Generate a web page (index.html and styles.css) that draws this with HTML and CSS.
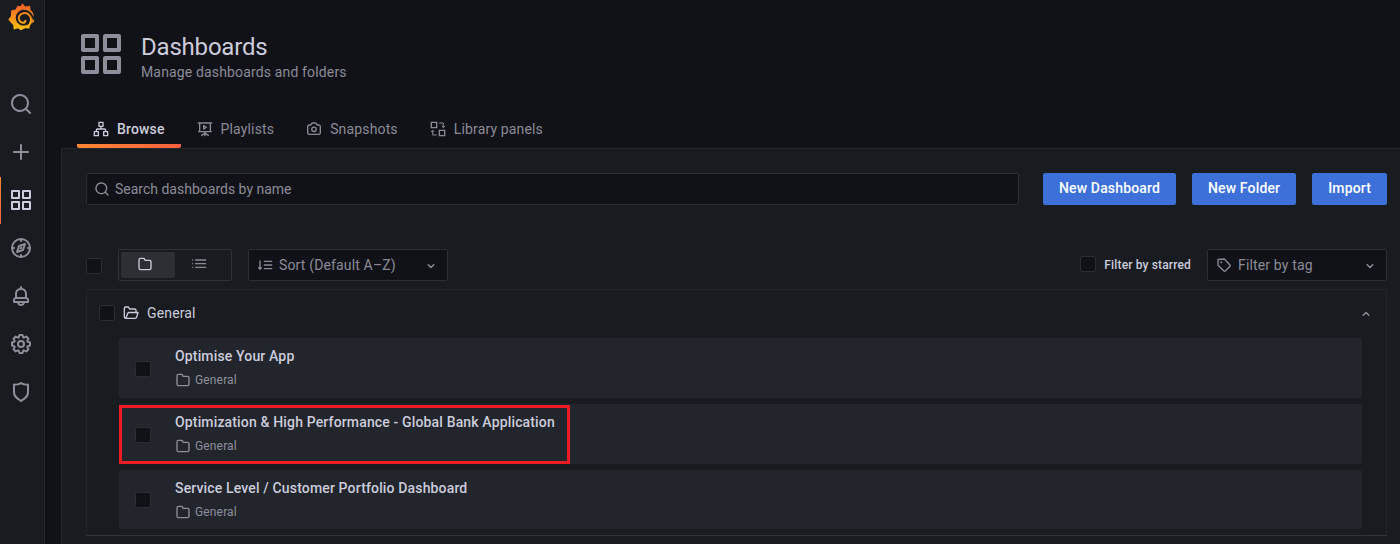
FILE: index.html
```
<!DOCTYPE html>
<html lang="en">
<head>
<meta charset="utf-8">
<title>Dashboards</title>
<link rel="stylesheet" href="styles.css">
</head>
<body>
<svg class="defs" aria-hidden="true">
  <symbol id="search" viewBox="0 0 24 24"><path d="M21.71,20.29,18,16.61A9,9,0,1,0,16.61,18l3.68,3.68a1,1,0,0,0,1.42,0A1,1,0,0,0,21.71,20.29ZM11,18a7,7,0,1,1,7-7A7,7,0,0,1,11,18Z"/></symbol>
  <symbol id="plus" viewBox="0 0 24 24"><path d="M19,11H13V5a1,1,0,0,0-2,0v6H5a1,1,0,0,0,0,2h6v6a1,1,0,0,0,2,0V13h6a1,1,0,0,0,0-2Z"/></symbol>
  <symbol id="apps" viewBox="0 0 24 24"><path d="M10,13H3a1,1,0,0,0-1,1v7a1,1,0,0,0,1,1h7a1,1,0,0,0,1-1V14A1,1,0,0,0,10,13ZM9,20H4V15H9ZM21,2H14a1,1,0,0,0-1,1v7a1,1,0,0,0,1,1h7a1,1,0,0,0,1-1V3A1,1,0,0,0,21,2ZM20,9H15V4h5Zm1,4H14a1,1,0,0,0-1,1v7a1,1,0,0,0,1,1h7a1,1,0,0,0,1-1V14A1,1,0,0,0,21,13Zm-1,7H15V15h5ZM10,2H3A1,1,0,0,0,2,3v7a1,1,0,0,0,1,1h7a1,1,0,0,0,1-1V3A1,1,0,0,0,10,2ZM9,9H4V4H9Z"/></symbol>
  <symbol id="compass" viewBox="0 0 24 24"><g fill="none" stroke="currentColor" stroke-width="2" stroke-linecap="round" stroke-linejoin="round"><circle cx="12" cy="12" r="9"/><path d="M12 3v2M12 19v2M3 12h2M19 12h2M16 8l-2 6-6 2 2-6zM11.6 12.4l.8-.8"/></g></symbol>
  <symbol id="bell" viewBox="0 0 24 24"><path d="M18,13.18V10a6,6,0,0,0-5-5.91V3a1,1,0,0,0-2,0V4.09A6,6,0,0,0,6,10v3.18A3,3,0,0,0,4,16v2a1,1,0,0,0,1,1H8.14a4,4,0,0,0,7.72,0H19a1,1,0,0,0,1-1V16A3,3,0,0,0,18,13.18ZM8,10a4,4,0,0,1,8,0v3H8Zm4,10a2,2,0,0,1-1.72-1h3.44A2,2,0,0,1,12,20Zm6-3H6V16a1,1,0,0,1,1-1H17a1,1,0,0,1,1,1Z"/></symbol>
  <symbol id="cog" viewBox="0 0 24 24"><path d="M21.32,9.55l-1.89-.63.89-1.78A1,1,0,0,0,20.13,6L18,3.87a1,1,0,0,0-1.15-.19l-1.78.89-.63-1.89A1,1,0,0,0,13.5,2h-3a1,1,0,0,0-.95.68L8.92,4.57,7.14,3.68A1,1,0,0,0,6,3.87L3.87,6a1,1,0,0,0-.19,1.15l.89,1.78-1.89.63A1,1,0,0,0,2,10.5v3a1,1,0,0,0,.68.95l1.89.63-.89,1.78A1,1,0,0,0,3.87,18L6,20.13a1,1,0,0,0,1.15.19l1.78-.89.63,1.89a1,1,0,0,0,.95.68h3a1,1,0,0,0,.95-.68l.63-1.89,1.78.89A1,1,0,0,0,18,20.13L20.13,18a1,1,0,0,0,.19-1.15l-.89-1.78,1.89-.63A1,1,0,0,0,22,13.5v-3A1,1,0,0,0,21.32,9.55ZM20,12.78l-1.2.4A2,2,0,0,0,17.64,16l.57,1.14-1.1,1.1L16,17.64a2,2,0,0,0-2.79,1.16l-.4,1.2H11.22l-.4-1.2A2,2,0,0,0,8,17.64l-1.14.57-1.1-1.1L6.36,16A2,2,0,0,0,5.2,13.18L4,12.78V11.22l1.2-.4A2,2,0,0,0,6.36,8L5.79,6.89l1.1-1.1L8,6.36A2,2,0,0,0,10.82,5.2l.4-1.2h1.56l.4,1.2A2,2,0,0,0,16,6.36l1.14-.57,1.1,1.1L17.64,8a2,2,0,0,0,1.16,2.79l1.2.4ZM12,8a4,4,0,1,0,4,4A4,4,0,0,0,12,8Zm0,6a2,2,0,1,1,2-2A2,2,0,0,1,12,14Z"/></symbol>
  <symbol id="shield" viewBox="0 0 24 24"><path d="M19.63,3.65a1,1,0,0,0-.84-.2,8,8,0,0,1-6.22-1.27,1,1,0,0,0-1.14,0A8,8,0,0,1,5.21,3.45a1,1,0,0,0-.84.2A1,1,0,0,0,4,4.43v7.45a9,9,0,0,0,3.77,7.33l3.65,2.6a1,1,0,0,0,1.16,0l3.65-2.6A9,9,0,0,0,20,11.88V4.43A1,1,0,0,0,19.63,3.65ZM18,11.88a7,7,0,0,1-2.93,5.7L12,19.77,8.93,17.58A7,7,0,0,1,6,11.88V5.58a10,10,0,0,0,6-1.39,10,10,0,0,0,6,1.39Z"/></symbol>
  <symbol id="folder" viewBox="0 0 24 24"><path d="M19,5.5H12.72l-.32-1a3,3,0,0,0-2.84-2H5a3,3,0,0,0-3,3v13a3,3,0,0,0,3,3H19a3,3,0,0,0,3-3V8.5A3,3,0,0,0,19,5.5Zm1,13a1,1,0,0,1-1,1H5a1,1,0,0,1-1-1V5.5a1,1,0,0,1,1-1H9.56a1,1,0,0,1,.95.68l.54,1.64A1,1,0,0,0,12,7.5h7a1,1,0,0,1,1,1Z"/></symbol>
  <symbol id="folder-open" viewBox="0 0 24 24"><path fill="none" stroke="currentColor" stroke-width="2" stroke-linejoin="round" d="M4.500 20a2.500 2.500 0 0 1-2.500-2.500V5a2 2 0 0 1 2-2h4.200l1.500 3H17.500a2 2 0 0 1 2 2v3M4.300 20L7.200 12.500a2 2 0 0 1 1.800-1.300H22.500L20.300 18.500A2 2 0 0 1 18.400 20z"/></symbol>
  <symbol id="sitemap" viewBox="0 0 24 24"><path fill="none" stroke="currentColor" stroke-width="2" stroke-linejoin="round" d="M9 2h6v6H9zM2 16h6v6H2zM16 16h6v6h-6zM12 8v4M5 16v-2a2 2 0 0 1 2-2h10a2 2 0 0 1 2 2v2"/></symbol>
  <symbol id="presentation" viewBox="0 0 24 24"><path fill="none" stroke="currentColor" stroke-width="2" stroke-linecap="round" stroke-linejoin="round" d="M2 3h20M4 3v13h16V3M2.500 16h19M12 16v6M12 18l-5 3.500M12 18l5 3.500M10 7l4 2.500-4 2.500z"/></symbol>
  <symbol id="camera" viewBox="0 0 24 24"><g fill="none" stroke="currentColor" stroke-width="2" stroke-linejoin="round"><path d="M5 6h2.300L8.500 4a2 2 0 0 1 1.600-1h3.800a2 2 0 0 1 1.600 1L16.700 6H19a2.500 2.500 0 0 1 2.500 2.500v9A2.500 2.500 0 0 1 19 20H5a2.500 2.500 0 0 1-2.500-2.500v-9A2.500 2.500 0 0 1 5 6z"/><circle cx="12" cy="12.500" r="3.300"/></g></symbol>
  <symbol id="library" viewBox="0 0 24 24"><path fill="none" stroke="currentColor" stroke-width="2" d="M2 2h8v8H2zM14 14h8v8h-8z"/><path fill="none" stroke="currentColor" stroke-width="1.500" d="M14 3h6v7M17.500 7.500L20 10l2.500-2.500M10 21H4v-7M1.500 16.500L4 14l2.500 2.500"/></symbol>
  <symbol id="list" viewBox="0 0 24 24"><path fill="none" stroke="currentColor" stroke-width="2" stroke-linecap="round" d="M7 6h15M7 11.500h15M7 17h15M2.500 6h.1M2.500 11.500h.1M2.500 17h.1"/></symbol>
  <symbol id="sort" viewBox="0 0 24 24"><path fill="none" stroke="currentColor" stroke-width="2" stroke-linecap="round" stroke-linejoin="round" d="M4.500 6v12M2.500 16L4.500 18.500 6.500 16M11 6.500h11M11 12h11M11 17.500h11"/></symbol>
  <symbol id="tag" viewBox="0 0 24 24"><path fill="none" stroke="currentColor" stroke-width="2" stroke-linejoin="round" d="M3 3.500L12.500 3l8.500 9a1.500 1.500 0 0 1 0 2l-7 7a1.500 1.500 0 0 1-2 0L3 12.500z"/><circle cx="7.800" cy="7.800" r="1.400"/></symbol>
  <symbol id="angle" viewBox="0 0 24 24"><path fill="none" stroke="currentColor" stroke-width="2.200" stroke-linecap="round" stroke-linejoin="round" d="M7.800 11.500l4.200 4.200 4.200-4.200"/></symbol>
</svg>
<div class="app">
  <nav class="sidebar">
    <svg class="logo" viewBox="0 0 27 28">
      <defs><linearGradient id="sun" x1="0" y1="28" x2="0" y2="0" gradientUnits="userSpaceOnUse"><stop offset="0" stop-color="#fcc50e"/><stop offset="1" stop-color="#f05a28"/></linearGradient></defs>
      <path fill="url(#sun)" d="M14.300 .3L17.300 3.400 22 2.800 22.600 7.200Q25.500 9 25.800 13.500L24.300 14 26.200 18.500 22.300 21.200 21.300 25.500 17 25.300 12.800 27.200 10 25.200 5.800 26.500 5.200 22 3 19.800 .3 16.600 3 13 3 7.500 7.500 6.500 9.500 2.700 12.500 3.200Z"/>
      <path fill="#181b1f" d="M26 14.500L24.500 15 24 19 20 21.500C17.500 23.200 13 23 10.300 20.400 6.900 17.200 7 11.900 10.300 8.900 14.200 5.500 20.300 6.500 23.300 10.200Q24.500 11.700 26 14.500Z"/>
      <path fill="none" stroke="url(#sun)" stroke-width="2" stroke-linecap="round" d="M21.800 21C24 17.600 23.200 13.300 20.200 11.200 17.100 9.200 12.800 10 11.200 13.200 9.800 16.300 11.700 19.700 15 19.700 16.500 19.700 17.300 18.800 17.400 17.800"/>
    </svg>
    <div class="nav">
      <span class="nav-item"><svg><use href="#search"/></svg></span>
      <span class="nav-item"><svg><use href="#plus"/></svg></span>
      <span class="nav-item active"><svg><use href="#apps"/></svg></span>
      <span class="nav-item"><svg><use href="#compass"/></svg></span>
      <span class="nav-item"><svg><use href="#bell"/></svg></span>
      <span class="nav-item"><svg><use href="#cog"/></svg></span>
      <span class="nav-item"><svg><use href="#shield"/></svg></span>
    </div>
  </nav>
  <main class="main">
    <header class="header">
      <svg class="header-icon"><use href="#apps"/></svg>
      <div>
        <h1>Dashboards</h1>
        <p>Manage dashboards and folders</p>
      </div>
    </header>
    <div class="tabs">
      <a class="tab current"><svg><use href="#sitemap"/></svg>Browse</a>
      <a class="tab"><svg><use href="#presentation"/></svg>Playlists</a>
      <a class="tab"><svg><use href="#camera"/></svg>Snapshots</a>
      <a class="tab"><svg><use href="#library"/></svg>Library panels</a>
    </div>
    <section class="panel">
      <div class="actions">
        <div class="field search"><svg><use href="#search"/></svg>Search dashboards by name</div>
        <a class="button">New Dashboard</a>
        <a class="button">New Folder</a>
        <a class="button">Import</a>
      </div>
      <div class="filters">
        <span class="check all"></span>
        <div class="toggle">
          <span class="option on"><svg><use href="#folder"/></svg></span>
          <span class="option"><svg><use href="#list"/></svg></span>
        </div>
        <div class="field sort"><svg><use href="#sort"/></svg>Sort (Default A–Z)<svg class="caret"><use href="#angle"/></svg></div>
        <span class="check starred-check"></span>
        <span class="starred">Filter by starred</span>
        <div class="field tags"><svg><use href="#tag"/></svg>Filter by tag<svg class="caret"><use href="#angle"/></svg></div>
      </div>
      <div class="group">
        <div class="group-head">
          <span class="check"></span>
          <svg><use href="#folder-open"/></svg>
          <span>General</span>
          <svg class="caret up"><use href="#angle"/></svg>
        </div>
        <div class="items">
          <article class="item">
            <span class="check"></span>
            <div><h2>Optimise Your App</h2><p><svg><use href="#folder"/></svg>General</p></div>
          </article>
          <article class="item">
            <span class="check"></span>
            <div><h2>Optimization &amp; High Performance - Global Bank Application</h2><p><svg><use href="#folder"/></svg>General</p></div>
            <span class="highlight"></span>
          </article>
          <article class="item last">
            <span class="check"></span>
            <div><h2>Service Level / Customer Portfolio Dashboard</h2><p><svg><use href="#folder"/></svg>General</p></div>
          </article>
        </div>
      </div>
    </section>
  </main>
</div>
</body>
</html>
```
FILE: styles.css
```
* { box-sizing: border-box; }
body {
  margin: 0;
  background: #111217;
  color: #ccccdc;
  font: 14px/22px Roboto, sans-serif;
  letter-spacing: 0.15px;
  overflow: hidden;
}
h1, h2, p { margin: 0; }
svg { fill: currentColor; flex: none; display: block; width: 16px; height: 16px; }
svg.defs { position: absolute; width: 0; height: 0; }

.app { display: flex; height: 544px; }
.sidebar { width: 45px; flex: none; background: #181b1f; border-right: 1px solid #25272c; }
.sidebar .logo { width: 27px; height: 28px; margin: 3px 0 0 8px; }
.nav { margin-top: 49px; color: #8e8e9a; }
.nav-item { display: flex; align-items: center; height: 48px; padding-left: 9px; }
.nav-item svg { width: 24px; height: 24px; }
.nav-item.active {
  color: #ccccdc;
  background: linear-gradient(#ff8833, #f55f3e) 0 1px / 1px 48px no-repeat;
}

.main { flex: 1; min-width: 0; padding-left: 16px; display: flex; flex-direction: column; }
.header { display: flex; padding: 30px 0 0 16px; height: 109px; }
.header-icon { width: 48px; height: 48px; color: #8e8e9a; }
.header div { margin-left: 16px; }
.header h1 { font-size: 24px; font-weight: 400; line-height: 32px; letter-spacing: -0.2px; padding-top: 1px; }
.header p { color: #8b8b97; margin-top: -2px; }

.tabs { display: flex; height: 39px; padding-left: 16px; color: #8b8b97; }
.tab { display: flex; align-items: center; height: 39px; padding: 0 16px; gap: 8px; }
.tab svg { margin-top: 1px; }
.tab.current {
  color: #ccccdc;
  font-weight: 500;
  background: linear-gradient(90deg, #ff8833, #f55f3e) 0 100% / 100% 4px no-repeat;
  border-radius: 2px;
}

.panel {
  flex: 1;
  background: #181b1f;
  border: solid #25272c;
  border-width: 1px 0 0 1px;
  padding: 24px 13px 0 24px;
}
.actions { display: flex; gap: 16px; }
.field {
  display: flex;
  align-items: center;
  gap: 5px;
  height: 32px;
  padding: 0 7px;
  background: #111217;
  border: 1px solid #2c2e34;
  border-radius: 2px;
  color: #8b8b97;
}
.search { flex: 1; margin-right: 8px; letter-spacing: 0; }
.button {
  height: 32px;
  padding: 0 16px;
  line-height: 31px;
  background: #3d71d9;
  border-radius: 2px;
  color: #fff;
  font-weight: 500;
}

.filters { display: flex; align-items: center; margin-top: 44px; }
.check { flex: none; width: 16px; height: 16px; background: #111217; border: 1px solid #2b2d33; border-radius: 2px; }
.check.all { margin-top: 2px; }
.toggle { display: flex; width: 114px; height: 32px; margin: 0 16px; padding: 2px; border: 1px solid #2e3035; border-radius: 2px; }
.option { display: flex; width: 54px; justify-content: center; align-items: center; color: #8b8b97; border-radius: 2px; padding-right: 6px; }
.option svg { margin-top: -2px; }
.option.on { background: #2c2f34; color: #ccccdc; }
.sort { width: 200px; }
.sort, .tags { gap: 6px; padding: 0 8px; }
.caret { margin-left: auto; }
.starred-check { margin: -2px 0 0 auto; }
.starred { margin: 0 16px 0 8px; font-size: 12px; font-weight: 500; }
.tags { width: 180px; }

.group { height: 247px; margin-top: 8px; border: 1px solid #22252b; border-bottom-color: #34363b; border-radius: 2px 2px 0 0; }
.group-head { display: flex; align-items: center; height: 48px; padding: 0 12px 2px; }
.group-head svg { margin: 0 8px; }
.group-head .caret { margin: 4px 0 0 auto; color: #8b8b97; }
.up { transform: rotate(180deg); }
.items { display: flex; flex-direction: column; gap: 6px; padding: 0 24px 0 32px; }
.item { position: relative; display: flex; align-items: center; gap: 24px; height: 60px; padding: 2px 16px 0; background: #22252b; border-radius: 2px; }
.item.last { height: 59px; padding-top: 1px; }
.item div { align-self: flex-start; margin-top: 5px; }
.item.last div { margin-top: 6px; }
.item h2 { font-size: 14px; font-weight: 500; line-height: 22px; }
.item p { display: flex; align-items: center; gap: 4px; margin-top: 4px; font-size: 12px; line-height: 18px; color: #8e8f9b; }
.item p svg { margin-top: -1px; }
.highlight { position: absolute; left: 0; top: 1px; width: 451px; height: 59px; border: 3px solid #ed1c24; }
```
